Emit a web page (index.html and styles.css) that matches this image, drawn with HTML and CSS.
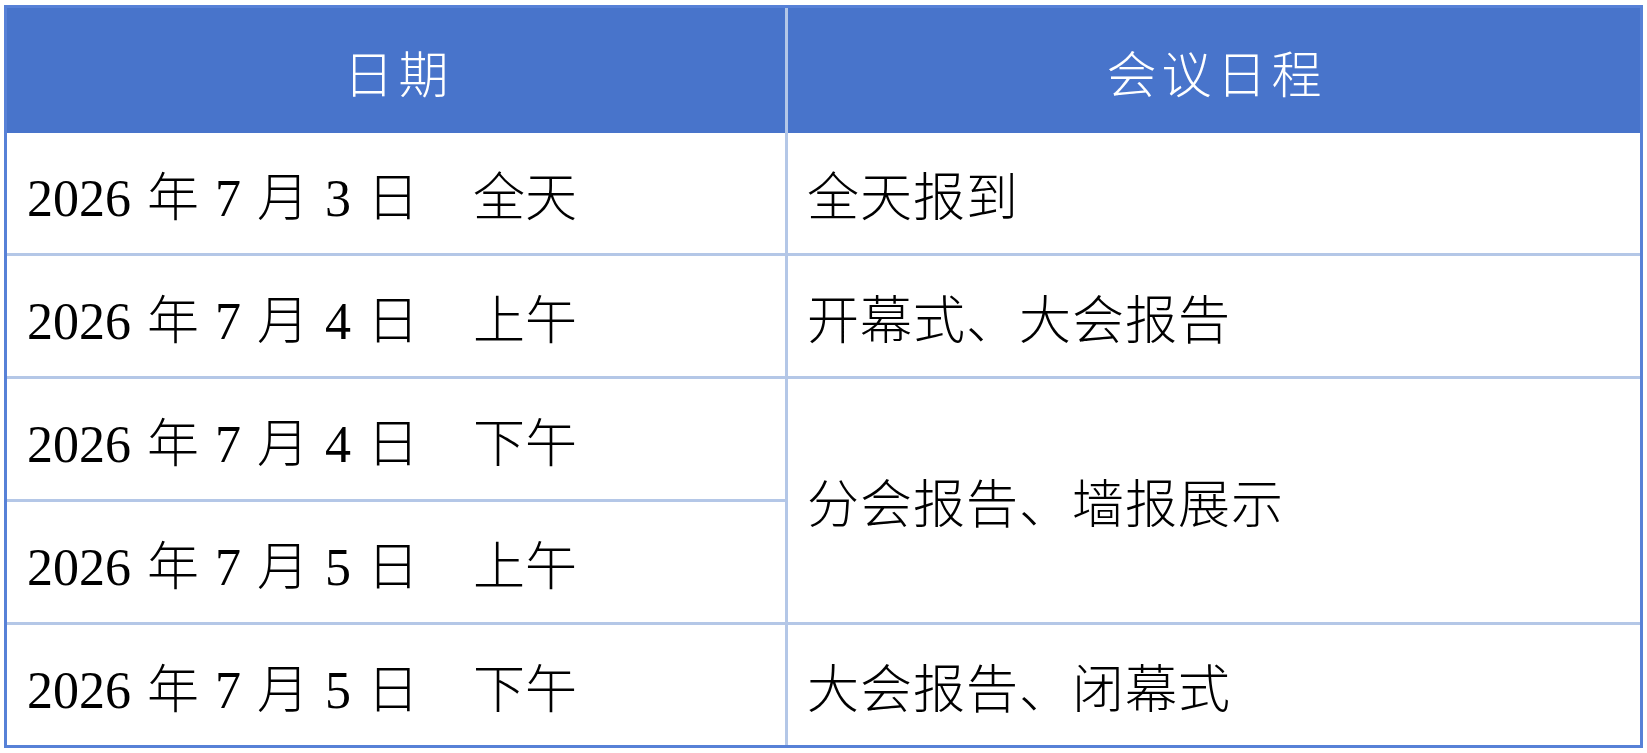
FILE: index.html
```html
<!DOCTYPE html>
<html lang="zh-CN">
<head>
<meta charset="utf-8">
<title>会议日程</title>
<link rel="stylesheet" href="styles.css">
</head>
<body>
<div class="schedule">
  <div class="thead">
    <div class="th">日期</div>
    <div class="th">会议日程</div>
  </div>
  <div class="tbody">
    <div class="td date-cell"><span class="date">2026 年 7 月 3 日</span><span class="half">全天</span></div>
    <div class="td agenda">全天报到</div>
    <div class="td date-cell"><span class="date">2026 年 7 月 4 日</span><span class="half">上午</span></div>
    <div class="td agenda">开幕式、大会报告</div>
    <div class="td date-cell"><span class="date">2026 年 7 月 4 日</span><span class="half">下午</span></div>
    <div class="td agenda merged">分会报告、墙报展示</div>
    <div class="td date-cell"><span class="date">2026 年 7 月 5 日</span><span class="half">上午</span></div>
    <div class="td date-cell"><span class="date">2026 年 7 月 5 日</span><span class="half">下午</span></div>
    <div class="td agenda">大会报告、闭幕式</div>
  </div>
</div>
</body>
</html>
```
FILE: styles.css
```css
html, body {
  margin: 0;
  padding: 0;
  background: #ffffff;
}

body {
  padding: 5px 4px;
  font-family: "Liberation Serif", "Noto Sans CJK SC", serif;
}

.schedule {
  width: 1633px;
  border: 3px solid #5781d7;
  background: #b4c7e7;
  display: flex;
  flex-direction: column;
}

.thead {
  display: grid;
  grid-template-columns: 778px 852px;
  column-gap: 3px;
  height: 125px;
}

.th {
  background: #4874cb;
  color: #ffffff;
  font-size: 50px;
  font-weight: 300;
  letter-spacing: 5px;
  padding-left: 5px;
  display: flex;
  align-items: center;
  justify-content: center;
}

.tbody {
  display: grid;
  grid-template-columns: 778px 852px;
  grid-template-rows: repeat(5, 120px);
  gap: 3px;
}

.td {
  background: #ffffff;
  color: #000000;
  font-size: 52px;
  font-weight: 300;
  display: flex;
  align-items: center;
}

.date-cell {
  grid-column: 1;
  padding-left: 20px;
}

.agenda {
  grid-column: 2;
  padding-left: 19px;
  letter-spacing: 1px;
}

.merged {
  grid-row: span 2;
}

.date {
  word-spacing: 3px;
}

.half {
  margin-left: 54px;
}
```
